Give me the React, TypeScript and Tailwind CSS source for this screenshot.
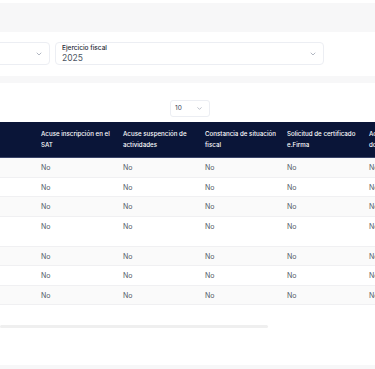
import { ChevronDown } from "lucide-react";

const headers = [
  "",
  "Acuse inscripción en el SAT",
  "Acuse suspención de actividades",
  "Constancia de situación fiscal",
  "Solicitud de certificado e.Firma",
  "Acuse actualización de domicilio",
];

const rows = [0, 1, 2, 3, 4, 5, 6];

export default function App() {
  return (
    <div
      className="w-[375px] h-[369px] overflow-hidden bg-white flex flex-col"
      style={{ fontFamily: "Inter, 'Noto Sans', sans-serif" }}
    >
      <div className="mt-[3px] h-[29px] bg-[#f7f7f8] shrink-0" />

      <div className="flex gap-[5px] mt-[10px] shrink-0">
        <div className="-ml-[60px] w-[110px] h-[23px] rounded-[4px] border border-[#eceef3] flex items-center justify-end pr-[6px]">
          <ChevronDown className="w-[8px] h-[8px] text-[#8b93a3]" strokeWidth={2} />
        </div>
        <div className="w-[269px] h-[23px] rounded-[4px] border border-[#eceef3] flex items-center justify-between pl-[6px] pr-[6px]">
          <div className="flex flex-col leading-none">
            <span className="text-[6.5px] font-medium text-[#1f2937]">Ejercicio fiscal</span>
            <span className="text-[8.5px] text-[#4b5563] mt-[2px]">2025</span>
          </div>
          <ChevronDown className="w-[8px] h-[8px] text-[#8b93a3]" strokeWidth={2} />
        </div>
      </div>

      <div className="mt-[11px] h-[7px] bg-[#f7f7f8] shrink-0" />

      <div className="flex justify-center mt-[17px] shrink-0">
        <div className="ml-[5px] w-[40px] h-[17px] rounded-[3px] border border-[#eceef3] flex items-center justify-between pl-[4px] pr-[6px]">
          <span className="text-[6.5px] text-[#374151]">10</span>
          <ChevronDown className="w-[7px] h-[7px] text-[#8b93a3]" strokeWidth={2} />
        </div>
      </div>

      <div className="mt-[5px] shrink-0">
        <table className="border-collapse table-fixed w-[443px]">
          <thead>
            <tr className="bg-[#0a1538] border-b border-[#3a4468]">
              {headers.map((h, i) => (
                <th
                  key={i}
                  className={`${i === 0 ? "w-[33px]" : "w-[82px]"} text-left align-middle pl-[8px] pr-0 py-[7px] text-[6.2px] leading-[10.5px] font-medium text-white`}
                >
                  {h}
                </th>
              ))}
            </tr>
          </thead>
          <tbody>
            {rows.map((r) => (
              <tr
                key={r}
                className={`${r % 2 === 0 ? "bg-[#fafafa]" : "bg-white"} border-b border-[#f0f0f2] ${r === 3 ? "h-[30px]" : "h-[19.5px]"}`}
              >
                {headers.map((_, i) => (
                  <td
                    key={i}
                    className="align-top pl-[8px] pt-[5px] text-[7px] leading-[10px] text-[#555b69]"
                  >
                    {i === 0 ? "" : "No"}
                  </td>
                ))}
              </tr>
            ))}
          </tbody>
        </table>
        <div className="mt-[20px] w-[268px] h-[3px] rounded-full bg-[#efefef]" />
      </div>

      <div className="mt-auto h-[4px] bg-[#f7f7f8] shrink-0" />
    </div>
  );
}
